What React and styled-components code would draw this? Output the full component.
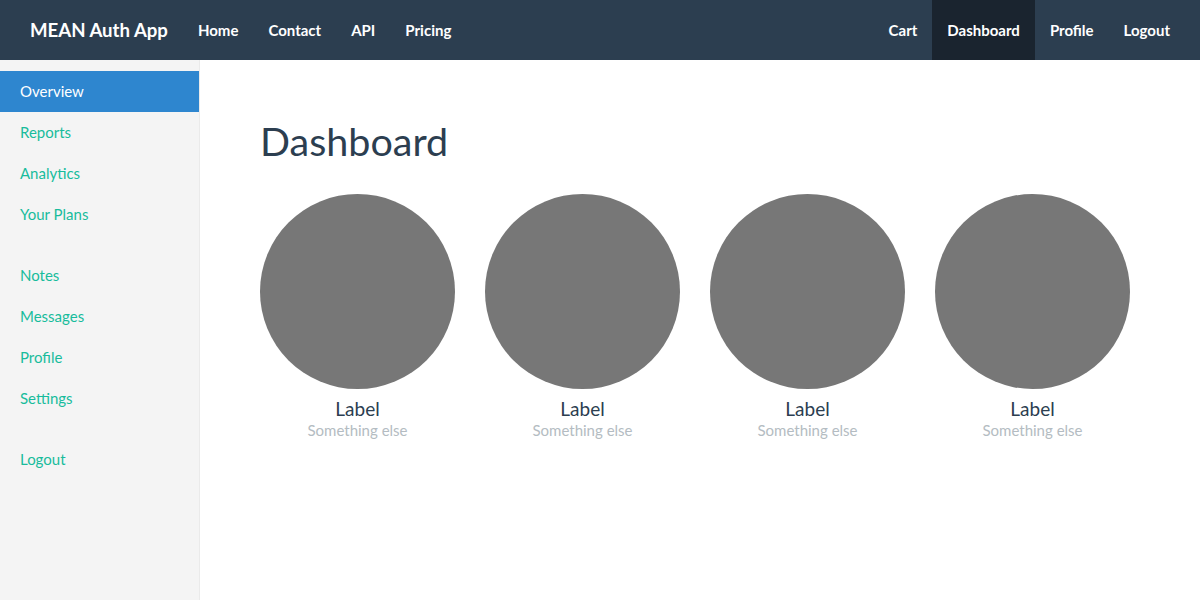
import React from 'react'
import styled, { createGlobalStyle } from 'styled-components'

const GlobalStyle = createGlobalStyle`
  * { box-sizing: border-box; }
  html, body { margin: 0; padding: 0; }
  body {
    font-family: Lato, 'Open Sans', sans-serif;
    font-size: 15px;
    line-height: 1.42857;
    color: #2c3e50;
    background: #fff;
  }
`

const Navbar = styled.nav`
  height: 60px;
  background: #2c3e50;
  display: flex;
  align-items: stretch;
  padding: 0 15px;
`

const Brand = styled.a`
  display: flex;
  align-items: center;
  padding: 1px 15px 0;
  font-size: 18.6px;
  font-weight: 700;
  color: #fff;
  text-decoration: none;
`

const NavList = styled.ul`
  list-style: none;
  margin: 0;
  padding: 0;
  display: flex;
  margin-left: ${(p) => (p.$right ? 'auto' : '0')};
`

const NavLink = styled.a`
  display: flex;
  align-items: center;
  height: 60px;
  padding: 1px 15px 0;
  font-size: 15px;
  font-weight: 700;
  color: #fff;
  text-decoration: none;
  background: ${(p) => (p.$active ? '#1a242f' : 'transparent')};
`

const Layout = styled.div`
  display: flex;
  min-height: 540px;
`

const Sidebar = styled.aside`
  width: 200px;
  flex-shrink: 0;
  background: #f4f4f4;
  border-right: 1px solid #eaeaea;
  padding-top: 11px;
`

const SideNav = styled.ul`
  list-style: none;
  margin: 0 0 20px;
  padding: 0;
`

const SideLink = styled.a`
  display: block;
  padding: 10px 20px;
  line-height: 21px;
  font-size: 15px;
  text-decoration: none;
  color: ${(p) => (p.$active ? '#fff' : '#18bc9c')};
  background: ${(p) => (p.$active ? '#2e86cf' : 'transparent')};
`

const Main = styled.main`
  flex: 1;
  padding: 20px 40px 20px 60px;
`

const Title = styled.h1`
  font-size: 39.5px;
  font-weight: 400;
  line-height: 1.1;
  margin: 39px 0 32px;
  color: #2c3e50;
`

const Placeholders = styled.div`
  display: grid;
  grid-template-columns: repeat(4, 225px);
  margin-left: -15px;
`

const Placeholder = styled.div`
  padding: 0 15px;
  text-align: center;
`

const Circle = styled.div`
  width: 195px;
  height: 195px;
  border-radius: 50%;
  background: #777;
  margin-bottom: 10px;
`

const Label = styled.h4`
  font-size: 19px;
  font-weight: 400;
  line-height: 1.1;
  margin: 0;
  color: #2c3e50;
`

const Muted = styled.span`
  font-size: 15px;
  color: #b4bcc2;
`

const leftLinks = ['Home', 'Contact', 'API', 'Pricing']
const rightLinks = ['Cart', 'Dashboard', 'Profile', 'Logout']
const sideGroups = [
  ['Overview', 'Reports', 'Analytics', 'Your Plans'],
  ['Notes', 'Messages', 'Profile', 'Settings'],
  ['Logout'],
]

const App = () => {
  return (
    <>
      <GlobalStyle />
      <Navbar>
        <Brand href='#'>MEAN Auth App</Brand>
        <NavList>
          {leftLinks.map((l) => (
            <li key={l}>
              <NavLink href='#'>{l}</NavLink>
            </li>
          ))}
        </NavList>
        <NavList $right>
          {rightLinks.map((l) => (
            <li key={l}>
              <NavLink href='#' $active={l === 'Dashboard'}>
                {l}
              </NavLink>
            </li>
          ))}
        </NavList>
      </Navbar>
      <Layout>
        <Sidebar>
          {sideGroups.map((group, i) => (
            <SideNav key={i}>
              {group.map((item) => (
                <li key={item}>
                  <SideLink href='#' $active={item === 'Overview'}>
                    {item}
                  </SideLink>
                </li>
              ))}
            </SideNav>
          ))}
        </Sidebar>
        <Main>
          <Title>Dashboard</Title>
          <Placeholders>
            {[0, 1, 2, 3].map((i) => (
              <Placeholder key={i}>
                <Circle />
                <Label>Label</Label>
                <Muted>Something else</Muted>
              </Placeholder>
            ))}
          </Placeholders>
        </Main>
      </Layout>
    </>
  )
}

export default App
